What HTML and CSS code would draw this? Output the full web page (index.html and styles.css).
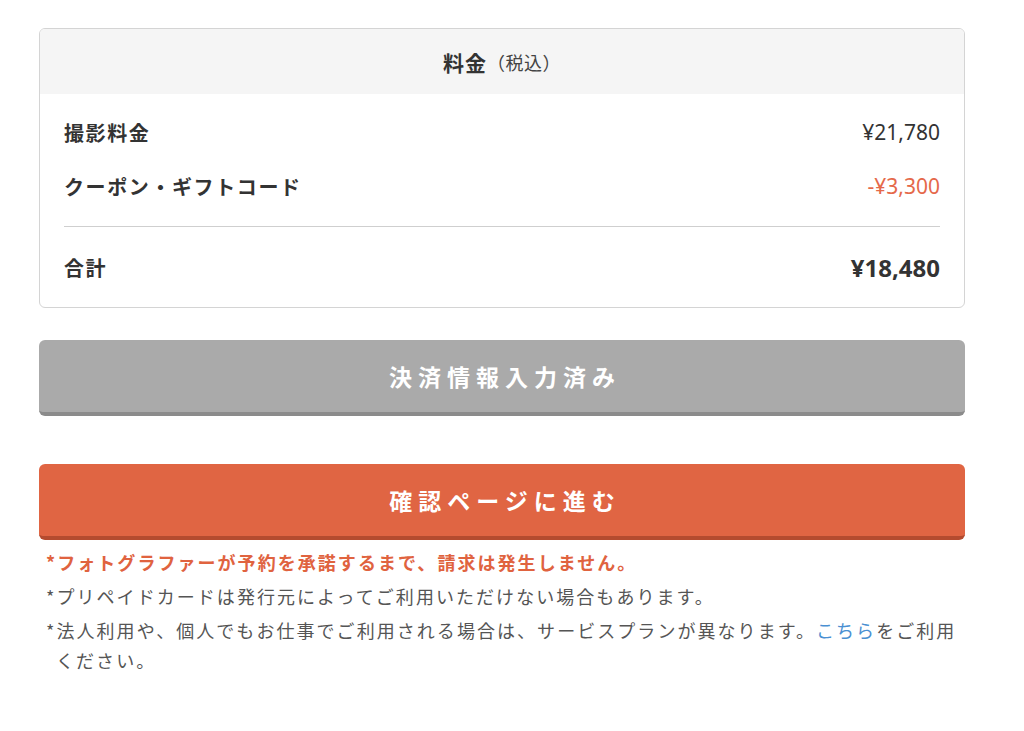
FILE: index.html
```html
<!DOCTYPE html>
<html lang="ja">
<head>
<meta charset="utf-8">
<link rel="stylesheet" href="styles.css">
</head>
<body>
<div class="page">
  <section class="card">
    <div class="card-head"><span class="title">料金</span><span class="tax">（税込）</span></div>
    <div class="card-body">
      <div class="row"><span class="label">撮影料金</span><span class="val">¥21,780</span></div>
      <div class="row row-2"><span class="label">クーポン・ギフトコード</span><span class="val discount">-¥3,300</span></div>
      <div class="divider"></div>
      <div class="row"><span class="label">合計</span><span class="val total">¥18,480</span></div>
    </div>
  </section>
  <div class="btn btn-gray">決済情報入力済み</div>
  <div class="btn btn-orange">確認ページに進む</div>
  <div class="notes">
    <p class="note strong">*フォトグラファーが予約を承諾するまで、請求は発生しません。</p>
    <p class="note">*プリペイドカードは発行元によってご利用いただけない場合もあります。</p>
    <p class="note">*法人利用や、個人でもお仕事でご利用される場合は、サービスプランが異なります。<a class="link">こちら</a>をご利用ください。</p>
  </div>
</div>
</body>
</html>
```

FILE: styles.css
```css
html, body {
  margin: 0;
  padding: 0;
  background: #fff;
}
body {
  font-family: "Noto Sans CJK JP", "Noto Sans", sans-serif;
  color: #333;
}
.page {
  width: 926px;
  margin-left: 39px;
  padding-top: 28px;
}
.card {
  border: 1px solid #d4d4d4;
  border-radius: 6px;
  overflow: hidden;
}
.card-head {
  height: 65px;
  background: #f5f5f5;
  display: flex;
  align-items: center;
  justify-content: center;
}
.title {
  font-size: 21px;
  font-weight: 700;
  letter-spacing: 1px;
}
.tax {
  font-size: 18px;
  color: #444;
  letter-spacing: 0.5px;
}
.card-body {
  padding: 23px 24px 25px 24px;
}
.row {
  display: flex;
  justify-content: space-between;
  align-items: center;
  height: 30px;
}
.row-2 {
  margin-top: 24px;
}
.label {
  font-size: 20px;
  font-weight: 700;
  letter-spacing: 1.6px;
}
.val {
  font-family: "Noto Sans", "Liberation Sans", sans-serif;
  font-size: 21px;
}
.discount {
  color: #e5694a;
}
.total {
  font-weight: 700;
  font-size: 24px;
}
.divider {
  height: 1px;
  background: #cfcfcf;
  margin: 25px 0 25px;
}
.btn {
  height: 72px;
  border-radius: 6px;
  border-bottom: 4px solid;
  display: flex;
  align-items: center;
  justify-content: center;
  color: #fff;
  font-size: 23px;
  font-weight: 700;
  letter-spacing: 6px;
  text-indent: 6px;
}
.btn-gray {
  margin-top: 32px;
  background: #aaaaaa;
  border-bottom-color: #8b8b8b;
}
.btn-orange {
  margin-top: 48px;
  background: #e06543;
  border-bottom-color: #b44b2f;
}
.notes {
  margin-top: 7px;
  padding-left: 7px;
  padding-right: 8px;
}
.note {
  margin: 0 0 4px;
  font-size: 18px;
  line-height: 30px;
  letter-spacing: 2.05px;
  color: #555;
  padding-left: 10px;
  text-indent: -10px;
}
.note.strong {
  color: #e0633f;
  font-weight: 700;
}
.link {
  color: #4a90d2;
}
```
